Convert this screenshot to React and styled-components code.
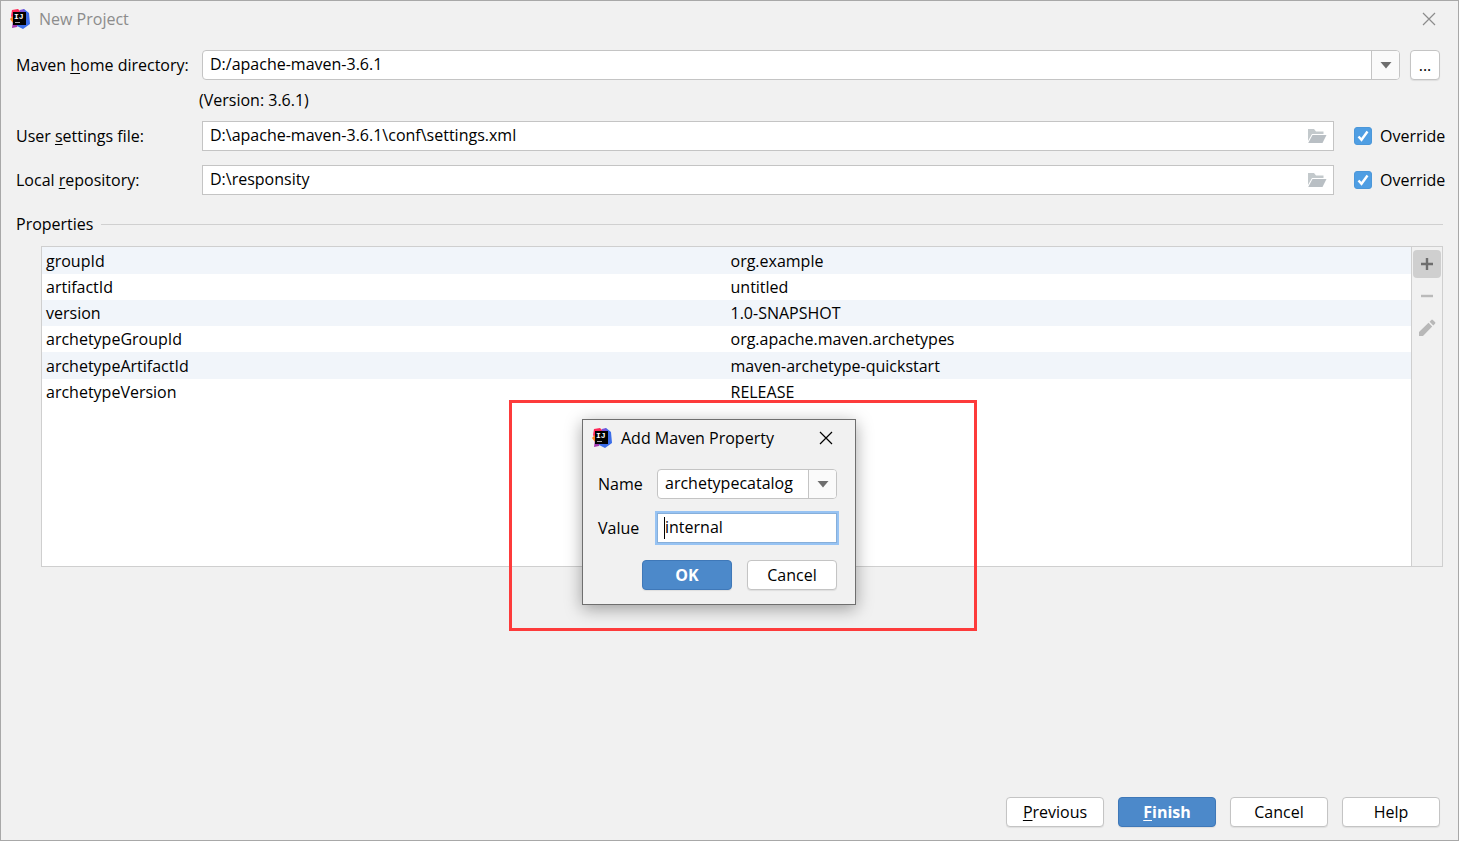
import React, {useState} from 'react';
import styled, {createGlobalStyle, css} from "styled-components";

const initialProperties = [
    {name: 'groupId', value: 'org.example'},
    {name: 'artifactId', value: 'untitled'},
    {name: 'version', value: '1.0-SNAPSHOT'},
    {name: 'archetypeGroupId', value: 'org.apache.maven.archetypes'},
    {name: 'archetypeArtifactId', value: 'maven-archetype-quickstart'},
    {name: 'archetypeVersion', value: 'RELEASE'},
];

const Logo = () => (
    <LogoSvg viewBox="0 0 20 20" aria-hidden="true">
        <path d="M2 1 L8 0 L11 3 L10 10 L3 11 L1 7 Z" fill="#fe2857"/>
        <path d="M0 10 L3 7 L6 13 L3 14 Z" fill="#fc801d"/>
        <path d="M3 12 L9 13 L7 18 L2 19 Z" fill="#a236b0"/>
        <path d="M10 3 L14 0 L19 4 L20 15 L13 20 L7 17 Z" fill="#3b6de8"/>
        <path d="M10 1 L14 0 L15 4 L9 5 Z" fill="#7a52d8"/>
        <rect x="3" y="3" width="13" height="13" fill="#000"/>
        <text x="4" y="10" fontSize="8" fontWeight="700" fontFamily="Liberation Mono, monospace" fill="#fff">IJ</text>
        <rect x="5" y="13" width="5" height="1" fill="#aaa"/>
    </LogoSvg>
);

const CloseIcon = () => (
    <svg width="14" height="14" viewBox="0 0 14 14" aria-hidden="true">
        <path d="M1 1 L13 13 M13 1 L1 13" stroke="currentColor" strokeWidth="1.2" fill="none"/>
    </svg>
);

const ArrowIcon = () => (
    <svg width="12" height="8" viewBox="0 0 12 8" aria-hidden="true">
        <path d="M0.5 1 H11.5 L6 7.5 Z" fill="#6e6e6e"/>
    </svg>
);

const FolderIcon = () => (
    <svg width="20" height="16" viewBox="0 0 20 16" aria-hidden="true">
        <path d="M1 1 H7 L9 3.5 H16.5 V6 H5 L1 13 Z" fill="#c3c9cc"/>
        <path d="M5.5 7 H19.5 L15.5 15 H1.2 Z" fill="#b9bfc4"/>
    </svg>
);

const CheckIcon = () => (
    <CheckSvg viewBox="0 0 18 18" aria-hidden="true">
        <path d="M4.5 9.5 L7.5 12.8 L13.5 4.5" stroke="#fff" strokeWidth="2.4" fill="none"/>
    </CheckSvg>
);

const PathField = ({id, label, value, checked}) => {
    const [isOverride, setIsOverride] = useState(checked);

    return (
        <FormRow>
            <Label htmlFor={id}>{label}</Label>
            <FieldBox>
                <Input id={id} defaultValue={value} readOnly={!isOverride}/>
                <BrowseButton type='button' aria-label='Browse'><FolderIcon/></BrowseButton>
            </FieldBox>
            <OverrideLabel>
                <CheckBox>
                    <Checkbox type='checkbox' checked={isOverride} onChange={() => setIsOverride(!isOverride)}/>
                    {isOverride && <CheckIcon/>}
                </CheckBox>
                Override
            </OverrideLabel>
        </FormRow>
    );
};

const PropertyDialog = () => {
    return (
        <Dialog role='dialog' aria-label='Add Maven Property'>
            <DialogTitle>
                <Logo/>
                <TitleText>Add Maven Property</TitleText>
                <CloseButton type='button' aria-label='Close dialog'><CloseIcon/></CloseButton>
            </DialogTitle>
            <DialogForm>
                <label htmlFor='property-name'>Name</label>
                <FieldBox $rounded>
                    <Input id='property-name' defaultValue='archetypecatalog'/>
                    <DropButton type='button' aria-label='Show names'><ArrowIcon/></DropButton>
                </FieldBox>
                <label htmlFor='property-value'>Value</label>
                <FieldBox $focused>
                    <Input id='property-value' defaultValue='internal'/>
                    <Caret/>
                </FieldBox>
            </DialogForm>
            <DialogButtons>
                <Button type='button' $width={90} $primary>OK</Button>
                <Button type='button' $width={90}>Cancel</Button>
            </DialogButtons>
        </Dialog>
    );
};

const App = () => {
    return (
        <Window>
            <GlobalStyle/>
            <TitleBar>
                <Logo/>
                <TitleText>New Project</TitleText>
                <CloseButton type='button' aria-label='Close'><CloseIcon/></CloseButton>
            </TitleBar>
            <Content>
                <FormRow $inset>
                    <Label htmlFor='maven-home'>Maven <u>h</u>ome directory:</Label>
                    <FieldBox $rounded>
                        <Input id='maven-home' defaultValue='D:/apache-maven-3.6.1'/>
                        <DropButton type='button' aria-label='Show directories'><ArrowIcon/></DropButton>
                    </FieldBox>
                    <Button type='button' $width={30} $spaced>...</Button>
                </FormRow>
                <Version>(Version: 3.6.1)</Version>
                <Fields>
                    <PathField
                        id='settings-file'
                        label={<>User <u>s</u>ettings file:</>}
                        value='D:\apache-maven-3.6.1\conf\settings.xml'
                        checked
                    />
                    <PathField
                        id='repository'
                        label={<>Local <u>r</u>epository:</>}
                        value='D:\responsity'
                        checked
                    />
                </Fields>
                <SectionTitle>Properties</SectionTitle>
                <PropertiesPanel>
                    <TableArea>
                        <Table aria-label='Properties'>
                            <tbody>
                            {initialProperties.map(({name, value}) => (
                                <Row key={name}>
                                    <Cell>{name}</Cell>
                                    <Cell>{value}</Cell>
                                </Row>
                            ))}
                            </tbody>
                        </Table>
                    </TableArea>
                    <Tools>
                        <ToolButton type='button' aria-label='Add' $active>
                            <svg width="20" height="20" viewBox="0 0 20 20">
                                <path d="M10 4 V16 M4 10 H16" stroke="#6e6e6e" strokeWidth="2.4"/>
                            </svg>
                        </ToolButton>
                        <ToolButton type='button' aria-label='Remove' disabled>
                            <svg width="20" height="20" viewBox="0 0 20 20">
                                <path d="M4 10 H16" stroke="#bababa" strokeWidth="2.4"/>
                            </svg>
                        </ToolButton>
                        <ToolButton type='button' aria-label='Edit' disabled>
                            <svg width="20" height="20" viewBox="0 0 20 20">
                                <path d="M2 14 L11.5 4.8 L15.2 8.5 L6 18 H2 Z M12.6 3.7 L14.6 1.8 Q15.2 1.4 15.8 1.9 L18.2 4.3 Q18.6 4.9 18.2 5.4 L16.3 7.4 Z" fill="#b8b8b8"/>
                            </svg>
                        </ToolButton>
                    </Tools>
                </PropertiesPanel>
            </Content>
            <Footer>
                <Button type='button' $width={98}><u>P</u>revious</Button>
                <Button type='button' $width={98} $primary><u>F</u>inish</Button>
                <Button type='button' $width={98}>Cancel</Button>
                <Button type='button' $width={98}>Help</Button>
            </Footer>
            <Highlight/>
            <PropertyDialog/>
        </Window>
    );
};

const GlobalStyle = createGlobalStyle`
  * {
    box-sizing: border-box;
  }

  body {
    margin: 0;
    background: #f1f1f1;
  }

  body, button, input {
    font-family: "Open Sans", "Noto Sans", sans-serif;
    font-size: 16px;
    line-height: 20px;
    color: #000;
  }

  u {
    text-underline-offset: 2px;
    text-decoration-skip-ink: none;
  }
`;

const Window = styled.main`
  position: relative;
  display: flex;
  flex-direction: column;
  min-height: 100vh;
  border: 1px solid #a8a8a8;
  background: #f1f1f1;
`;

const TitleBar = styled.header`
  display: flex;
  align-items: center;
  height: 36px;
  padding: 0 15px 0 9px;
  color: #8c8c8c;
`;

const LogoSvg = styled.svg`
  width: 20px;
  height: 20px;
`;

const TitleText = styled.span`
  flex: 1;
  margin-left: 9px;
`;

const CloseButton = styled.button`
  display: flex;
  align-items: center;
  justify-content: center;
  width: 28px;
  height: 28px;
  padding: 0;
  border: 0;
  background: none;
  color: inherit;
`;

const Content = styled.div`
  flex: 1;
  padding: 13px 15px 0;
`;

const FormRow = styled.div`
  display: flex;
  align-items: center;
  padding-right: ${({$inset}) => ($inset ? '3px' : '0')};
`;

const Label = styled.label`
  width: 186px;
`;

const FieldBox = styled.div`
  position: relative;
  display: flex;
  flex: 1;
  height: 30px;
  min-width: 0;
  border: 1px solid #c4c4c4;
  border-radius: ${({$rounded}) => ($rounded ? '4px' : '0')};
  background: #fff;
  overflow: hidden;

  ${({$focused}) => $focused && css`
    border-color: #87afda;
    box-shadow: 0 0 0 2px #97c3f3;
    overflow: visible;
  `}
`;

const Input = styled.input`
  flex: 1;
  min-width: 0;
  padding: 0 7px 2px;
  border: 0;
  outline: 0;
  background: transparent;
`;

const Caret = styled.i`
  position: absolute;
  left: 6px;
  top: 3px;
  width: 1px;
  height: 22px;
  background: #000;
`;

const DropButton = styled.button`
  display: flex;
  align-items: center;
  justify-content: center;
  width: 28px;
  padding: 0;
  border: 0;
  border-left: 1px solid #c4c4c4;
  background: #fafafa;
`;

const BrowseButton = styled.button`
  display: flex;
  align-items: center;
  padding: 0 6px;
  border: 0;
  background: none;
`;

const OverrideLabel = styled.label`
  display: flex;
  align-items: center;
  gap: 8px;
  width: 109px;
  padding-left: 20px;
  white-space: nowrap;
`;

const CheckBox = styled.span`
  position: relative;
  display: flex;
  flex: none;
`;

const Checkbox = styled.input`
  appearance: none;
  width: 18px;
  height: 18px;
  margin: 0;
  border: 1px solid #b0b0b0;
  border-radius: 3px;
  background: #fff;

  &:checked {
    border-color: #4b97d9;
    background: #4f9ee3;
  }
`;

const CheckSvg = styled.svg`
  position: absolute;
  inset: 0;
  pointer-events: none;
`;

const Version = styled.p`
  margin: 0;
  padding: 10px 0 11px 183px;
`;

const Fields = styled.div`
  display: grid;
  gap: 14px;
`;

const SectionTitle = styled.h2`
  display: flex;
  align-items: center;
  gap: 8px;
  margin: 19px 0 12px;
  font-size: 16px;
  font-weight: 400;

  &::after {
    content: '';
    flex: 1;
    height: 1px;
    background: #d0d0d0;
  }
`;

const PropertiesPanel = styled.section`
  display: flex;
  min-height: 321px;
  margin-left: 25px;
  border: 1px solid #cfcfcf;
`;

const TableArea = styled.div`
  flex: 1;
  background: #fff;
`;

const Table = styled.table`
  width: 100%;
  table-layout: fixed;
  border-collapse: collapse;
`;

const Row = styled.tr`
  height: 26px;

  &:nth-child(odd) {
    background: #f1f5fa;
  }

  &:nth-child(4n + 1) {
    height: 27px;
  }
`;

const Cell = styled.td`
  padding: 0 4px;
`;

const Tools = styled.div`
  display: flex;
  flex-direction: column;
  gap: 4px;
  padding: 3px 1px;
  border-left: 1px solid #cfcfcf;
`;

const ToolButton = styled.button`
  display: flex;
  align-items: center;
  justify-content: center;
  width: 28px;
  height: 28px;
  padding: 0;
  border: 0;
  border-radius: 4px;
  background: ${({$active}) => ($active ? '#cfcfcf' : 'none')};
`;

const Button = styled.button`
  flex: none;
  width: ${({$width}) => $width}px;
  height: 30px;
  margin-left: ${({$spaced}) => ($spaced ? '10px' : '0')};
  padding: 0;
  border: 1px solid #c4c4c4;
  border-radius: 4px;
  background: #fff;
  box-shadow: 0 1px 1px rgba(0, 0, 0, 0.08);

  ${({$primary}) => $primary && css`
    border-color: #3f78b8;
    background: #4c89ca;
    color: #fff;
    font-weight: 700;
  `}
`;

const Footer = styled.footer`
  display: flex;
  justify-content: flex-end;
  gap: 14px;
  padding: 14px 18px 13px;
`;

const Highlight = styled.div`
  position: absolute;
  left: 508px;
  top: 399px;
  width: 468px;
  height: 231px;
  border: 3px solid #fd3b3b;
  pointer-events: none;
`;

const Dialog = styled.div`
  position: absolute;
  left: 581px;
  top: 418px;
  width: 274px;
  border: 1px solid #6f6f6f;
  background: #f1f1f1;
  box-shadow: 0 4px 16px rgba(0, 0, 0, 0.35);
`;

const DialogTitle = styled.div`
  display: flex;
  align-items: center;
  height: 36px;
  padding: 0 15px 0 9px;
`;

const DialogForm = styled.div`
  display: grid;
  grid-template-columns: 59px 1fr;
  align-items: center;
  row-gap: 14px;
  padding: 13px 18px 0 15px;
`;

const DialogButtons = styled.div`
  display: flex;
  justify-content: flex-end;
  gap: 15px;
  padding: 17px 18px 14px;
`;

export default App;
